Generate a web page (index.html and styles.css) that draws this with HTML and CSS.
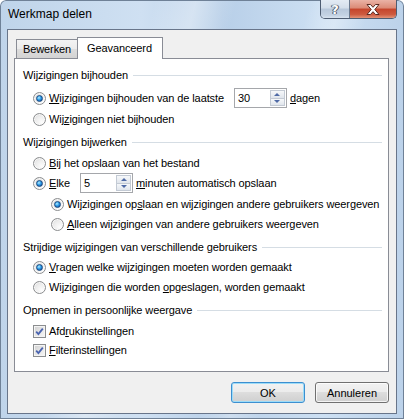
FILE: index.html
```html
<!DOCTYPE html>
<html lang="nl">
<head>
<meta charset="utf-8">
<title>Werkmap delen</title>
<link rel="stylesheet" href="styles.css">
</head>
<body>
<div class="window">
  <div class="titlebar">
    <span class="title">Werkmap delen</span>
    <div class="caption-btns">
      <div class="cbtn help">?</div>
      <div class="cbtn close">
        <svg width="14" height="11" viewBox="0 0 14 11"><path d="M1 0.5h3.5L7 3.3 9.5 0.5H13L8.8 5.5 13 10.5H9.5L7 7.7 4.5 10.5H1L5.2 5.5z" fill="#fff" stroke="#5a2a22" stroke-width="1" stroke-linejoin="round"/></svg>
      </div>
    </div>
  </div>
  <div class="client">
    <div class="tabs">
      <div class="tab">Bewerken</div>
      <div class="tab active">Geavanceerd</div>
    </div>
    <div class="panel">
      <div class="group-h"><span>Wijzigingen bijhouden</span><i class="rule"></i></div>
      <div class="row opt gap3">
        <span class="radio on"></span>
        <span class="label"><u>W</u>ijzigingen bijhouden van de laatste</span>
        <span class="spin spin-days"><span class="spin-val">30</span><span class="spin-btns"><i class="up"></i><i class="down"></i></span></span>
        <span class="label"><u>d</u>agen</span>
      </div>
      <div class="row opt gap1">
        <span class="radio"></span>
        <span class="label">Wij<u>z</u>igingen niet bijhouden</span>
      </div>

      <div class="group-h gap3"><span>Wijzigingen bijwerken</span><i class="rule"></i></div>
      <div class="row opt gap1">
        <span class="radio"></span>
        <span class="label"><u>B</u>ij het opslaan van het bestand</span>
      </div>
      <div class="row opt">
        <span class="radio on"></span>
        <span class="label"><u>E</u>lke</span>
        <span class="spin spin-min"><span class="spin-val">5</span><span class="spin-btns"><i class="up"></i><i class="down"></i></span></span>
        <span class="label"><u>m</u>inuten automatisch opslaan</span>
      </div>
      <div class="row sub gap1">
        <span class="radio on"></span>
        <span class="label">Wijzigingen op<u>s</u>laan en wijzigingen andere gebruikers weergeven</span>
      </div>
      <div class="row sub">
        <span class="radio"></span>
        <span class="label"><u>A</u>lleen wijzigingen van andere gebruikers weergeven</span>
      </div>

      <div class="group-h gap3"><span>Strijdige wijzigingen van verschillende gebruikers</span><i class="rule"></i></div>
      <div class="row opt">
        <span class="radio on"></span>
        <span class="label"><u>V</u>ragen welke wijzigingen moeten worden gemaakt</span>
      </div>
      <div class="row opt">
        <span class="radio"></span>
        <span class="label">Wijzigingen die worden <u>o</u>pgeslagen, worden gemaakt</span>
      </div>

      <div class="group-h gap3"><span>Opnemen in persoonlijke weergave</span><i class="rule"></i></div>
      <div class="row opt chk gap2">
        <span class="check"><svg width="11" height="11" viewBox="0 0 11 11"><path d="M2.2 5.6 4.4 8 8.8 2.6" fill="none" stroke="#4a64b0" stroke-width="1.8"/></svg></span>
        <span class="label">Afd<u>r</u>ukinstellingen</span>
      </div>
      <div class="row opt chk">
        <span class="check"><svg width="11" height="11" viewBox="0 0 11 11"><path d="M2.2 5.6 4.4 8 8.8 2.6" fill="none" stroke="#4a64b0" stroke-width="1.8"/></svg></span>
        <span class="label"><u>F</u>ilterinstellingen</span>
      </div>
    </div>
    <div class="buttons">
      <button class="btn default">OK</button>
      <button class="btn">Annuleren</button>
    </div>
  </div>
</div>
</body>
</html>
```
FILE: styles.css
```css
html, body {
  margin: 0;
  padding: 0;
}
body {
  font-family: "Liberation Sans", Arial, sans-serif;
  font-size: 11px;
  color: #000;
  background: #fff;
}
.window {
  width: 404px;
  height: 419px;
  box-sizing: border-box;
  display: flex;
  flex-direction: column;
  border-radius: 6px 6px 0 0;
  background:
    linear-gradient(105deg, rgba(255,255,255,0) 30%, rgba(255,255,255,0.35) 38%, rgba(255,255,255,0) 46%, rgba(255,255,255,0) 60%, rgba(255,255,255,0.3) 66%, rgba(255,255,255,0) 72%),
    linear-gradient(90deg, #bfd4ea 0%, #cfe0f2 35%, #b8cfe8 55%, #cde0f3 80%, #bcd2ea 100%);
  box-shadow: inset 0 0 0 1px #6f8197;
}
.titlebar {
  height: 29px;
  flex: none;
  display: flex;
  align-items: flex-start;
  padding-left: 8px;
}
.title {
  font-size: 12px;
  line-height: 15px;
  padding-top: 7px;
  flex: 1;
  color: #000;
}
.caption-btns {
  display: flex;
  margin-right: 7px;
  border: 1px solid #4e5d72;
  border-top: none;
  border-radius: 0 0 5px 5px;
  overflow: hidden;
}
.cbtn {
  height: 18px;
  display: flex;
  align-items: center;
  justify-content: center;
}
.help {
  width: 28px;
  border-right: 1px solid #6a7a8f;
  background: linear-gradient(#e3ebf4 0%, #d3deea 45%, #b7c7da 50%, #c4d3e4 85%, #d8e3ef 100%);
  color: #fff;
  font-family: "DejaVu Sans", sans-serif;
  font-weight: bold;
  font-size: 13px;
  text-shadow: 0 0 1px #3f4c5c, 0 0 1px #3f4c5c, 1px 0 0 #5a6676, -1px 0 0 #5a6676;
}
.close {
  width: 46px;
  background: linear-gradient(#eab3a6 0%, #db8a76 45%, #c5452c 50%, #cd5a3f 80%, #e39378 100%);
}
.client {
  flex: 1;
  margin: 0 7px 5px 7px;
  border: 1px solid #68758a;
  background: #f0f0f0;
  display: flex;
  flex-direction: column;
  padding: 7px 7px 0 6px;
  letter-spacing: -0.1px;
}
.tabs {
  height: 21px;
  flex: none;
  display: flex;
  align-items: flex-end;
  padding-left: 2px;
}
.tab {
  box-sizing: border-box;
  height: 19px;
  width: 62px;
  padding-left: 6px;
  border: 1px solid #898c95;
  border-bottom: none;
  background: linear-gradient(#f3f3f3 0%, #ebebeb 50%, #dddddd 50%, #d3d3d3 100%);
  display: flex;
  align-items: center;
}
.tab.active {
  height: 22px;
  width: 86px;
  padding-left: 9px;
  margin-left: -1px;
  margin-bottom: -1px;
  background: #fff;
  position: relative;
  z-index: 1;
  padding-bottom: 2px;
}
.panel {
  height: 314px;
  box-sizing: border-box;
  border: 1px solid #898c95;
  background: #fff;
  padding-top: 6px;
  display: flex;
  flex-direction: column;
}
.group-h {
  height: 20px;
  flex: none;
  display: flex;
  align-items: center;
  padding: 0 6px 0 8px;
}
.rule {
  flex: 1;
  height: 1px;
  margin-left: 5px;
  background: #d5dde4;
}
.row {
  height: 20px;
  flex: none;
  display: flex;
  align-items: center;
}
.opt { padding-left: 18px; }
.sub { padding-left: 36px; }
.chk { height: 19px; }
.gap1 { margin-top: 1px; }
.gap2 { margin-top: 2px; }
.gap3 { margin-top: 3px; }
.label {
  margin-left: 3px;
  white-space: nowrap;
  line-height: 13px;
}
.radio {
  flex: none;
  position: relative;
  width: 13px;
  height: 13px;
  box-sizing: border-box;
  border-radius: 50%;
  border: 1px solid #8b8d8f;
  background: radial-gradient(circle at 70% 75%, #fdfdfd 0%, #ececec 55%, #d4d4d4 100%);
  box-shadow: inset 0 0 0 1px rgba(255,255,255,0.7);
}
.radio.on::after {
  content: "";
  position: absolute;
  left: 2px;
  top: 2px;
  width: 7px;
  height: 7px;
  box-sizing: border-box;
  border-radius: 50%;
  background: radial-gradient(circle at 38% 35%, #b5ecff 0%, #39a6ec 40%, #1565b8 75%, #0f3f7a 100%);
  border: 1px solid #1b4a80;
}
.check {
  flex: none;
  width: 13px;
  height: 13px;
  box-sizing: border-box;
  border: 1px solid #8b8d8f;
  background: linear-gradient(135deg, #cfcfcf 0%, #e6e6e6 50%, #f7f7f7 100%);
  box-shadow: inset 0 0 0 1px #f4f4f4;
  display: flex;
}
.spin {
  flex: none;
  box-sizing: border-box;
  height: 20px;
  width: 53px;
  border: 1px solid #a5a7ab;
  background: #fff;
  display: flex;
  align-items: stretch;
  padding: 1px 1px 1px 0;
}
.spin-days { margin-left: 10px; }
.spin-min { margin-left: 10px; }
.spin-val {
  flex: 1;
  padding-left: 3px;
  display: flex;
  align-items: center;
}
.spin-btns {
  width: 15px;
  display: flex;
  flex-direction: column;
}
.spin-btns i {
  flex: 1;
  box-sizing: border-box;
  border: 1px solid #c3cad4;
  background: linear-gradient(#f6f8fa, #e0e5ec);
  display: flex;
  align-items: center;
  justify-content: center;
}
.spin-btns i.down { border-top: none; }
.spin-btns i::after {
  content: "";
  width: 0;
  height: 0;
  border-left: 3px solid transparent;
  border-right: 3px solid transparent;
}
.spin-btns i.up::after { border-bottom: 3px solid #4f6aa6; }
.spin-btns i.down::after { border-top: 3px solid #4f6aa6; }
.buttons {
  flex: none;
  display: flex;
  justify-content: flex-end;
  gap: 10px;
  margin-top: 10px;
}
.btn {
  width: 74px;
  height: 21px;
  box-sizing: border-box;
  border: 1px solid #707070;
  border-radius: 3px;
  background: linear-gradient(#f2f2f2 0%, #ebebeb 50%, #dddddd 50%, #cfcfcf 100%);
  box-shadow: inset 0 0 0 1px rgba(255,255,255,0.75);
  font-family: "Liberation Sans", Arial, sans-serif;
  font-size: 11px;
  color: #000;
  padding: 0;
  margin: 0;
}
.btn.default {
  border-color: #3c8fd0;
  box-shadow: inset 0 0 0 1px #9ddcf8;
}
```
